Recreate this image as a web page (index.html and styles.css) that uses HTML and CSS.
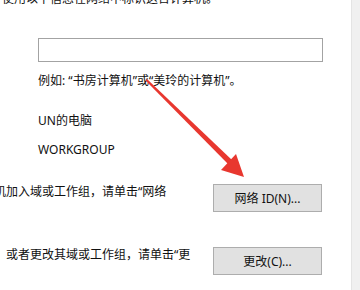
FILE: index.html
```html
<!DOCTYPE html>
<html lang="zh-CN">
<head>
<meta charset="utf-8">
<link rel="stylesheet" href="styles.css">
</head>
<body>
<div class="page">
  <div class="main">
    <p class="intro">使用以下信息在网络中标识这台计算机。</p>
    <div class="field"><input class="input" type="text"></div>
    <p class="hint">例如: “书房计算机”或“美玲的计算机”。</p>
    <p class="value value-name">UN的电脑</p>
    <p class="value value-group">WORKGROUP</p>
    <div class="row row-first">
      <span class="label label-cut">机加入域或工作组，请单击“网络</span>
      <button class="btn">网络 ID(N)...</button>
    </div>
    <div class="row row-second">
      <span class="label label-shift">或者更改其域或工作组，请单击“更</span>
      <button class="btn">更改(C)...</button>
    </div>
    <svg class="arrow" width="360" height="290" viewBox="0 0 360 290">
      <polygon points="145.5,80.5 147,79 232.5,160.5 229,165" fill="#e8372f"/>
      <polygon points="244,177 221,170 236,154" fill="#e8372f"/>
    </svg>
  </div>
  <div class="strip"></div>
</div>
</body>
</html>
```
FILE: styles.css
```css
html, body {
  margin: 0;
  padding: 0;
  background: #ffffff;
}
.page {
  display: flex;
  width: 360px;
  height: 290px;
  overflow: hidden;
  font-family: "Noto Sans", "Noto Sans CJK SC", sans-serif;
  font-size: 12px;
  color: #111111;
}
.main {
  flex: 1;
  position: relative;
  overflow: hidden;
}
.strip {
  width: 8px;
  background: #f0f0f0;
  border-left: 1px solid #e4e4e4;
}
p {
  margin: 0;
  line-height: 16px;
  white-space: nowrap;
}
.intro {
  margin: -9px 0 0 2px;
}
.field {
  margin: 31px 0 0 38px;
}
.input {
  display: block;
  box-sizing: border-box;
  width: 285px;
  height: 24px;
  margin: 0;
  border: 1px solid #a3a3a3;
  background: #fff;
  outline: none;
}
.hint {
  margin: 11px 0 0 38px;
}
.value-name {
  margin: 24px 0 0 38px;
}
.value-group {
  margin: 13px 0 0 38px;
}
.row {
  display: grid;
  grid-template-columns: 213px 109px;
  align-items: start;
}
.row-first {
  margin-top: 26px;
}
.row-second {
  margin-top: 35px;
}
.label {
  line-height: 16px;
  white-space: nowrap;
}
.label-cut {
  margin-left: -6px;
}
.label-shift {
  margin-left: 6px;
}
.btn {
  box-sizing: border-box;
  width: 109px;
  height: 28px;
  margin: 0;
  padding: 0;
  border: 1px solid #adadad;
  background: #e1e1e1;
  font-family: "Noto Sans", "Noto Sans CJK SC", sans-serif;
  font-size: 12px;
  color: #111111;
}
.arrow {
  position: absolute;
  left: 0;
  top: 0;
  pointer-events: none;
}
```
